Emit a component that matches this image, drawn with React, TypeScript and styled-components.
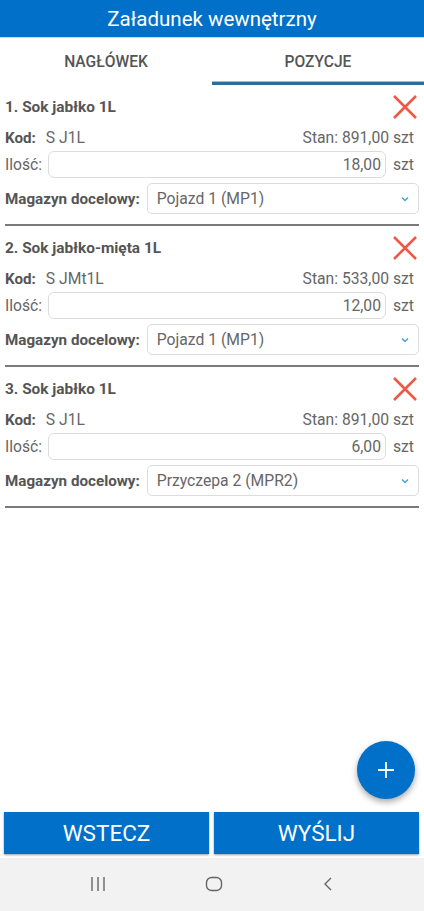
import React from "react";
import styled, { createGlobalStyle } from "styled-components";

const items = [
  { name: "Sok jabłko 1L", code: "S J1L", stock: "891,00", qty: "18,00", target: "Pojazd 1 (MP1)" },
  { name: "Sok jabłko-mięta 1L", code: "S JMt1L", stock: "533,00", qty: "12,00", target: "Pojazd 1 (MP1)" },
  { name: "Sok jabłko 1L", code: "S J1L", stock: "891,00", qty: "6,00", target: "Przyczepa 2 (MPR2)" },
];

export default function App() {
  return (
    <>
      <GlobalStyle />
      <Screen>
        <Header>Załadunek wewnętrzny</Header>
        <Tabs>
          <Tab>NAGŁÓWEK</Tab>
          <Tab active>POZYCJE</Tab>
        </Tabs>
        <List>
          {items.map((item, index) => (
            <Item key={index}>
              <TitleRow>
                <ItemName>
                  {index + 1}. {item.name}
                </ItemName>
                <RemoveButton>
                  <svg width="26" height="26" viewBox="0 0 26 26">
                    <path d="M2 2 L24 24 M24 2 L2 24" stroke="#f05846" strokeWidth="2.6" strokeLinecap="butt" />
                  </svg>
                </RemoveButton>
              </TitleRow>
              <InfoRow>
                <span>
                  <Label>Kod:</Label>
                  <Code>{item.code}</Code>
                </span>
                <span>Stan: {item.stock} szt</span>
              </InfoRow>
              <QtyRow>
                <span>Ilość:</span>
                <QtyInput>{item.qty}</QtyInput>
                <span>szt</span>
              </QtyRow>
              <TargetRow>
                <Label>Magazyn docelowy:</Label>
                <Select>
                  <span>{item.target}</span>
                  <svg width="8" height="6" viewBox="0 0 8 6">
                    <path d="M1 1.5 L4 4.5 L7 1.5" stroke="#4a9fd8" strokeWidth="1.5" fill="none" />
                  </svg>
                </Select>
              </TargetRow>
            </Item>
          ))}
        </List>
        <Fab>
          <svg width="18" height="18" viewBox="0 0 18 18">
            <path d="M9 1 V17 M1 9 H17" stroke="#fff" strokeWidth="1.8" />
          </svg>
        </Fab>
        <Actions>
          <ActionButton>WSTECZ</ActionButton>
          <ActionButton>WYŚLIJ</ActionButton>
        </Actions>
        <NavBar>
          <svg width="16" height="16" viewBox="0 0 16 16">
            <path d="M2 1 V15 M8 1 V15 M14 1 V15" stroke="#666" strokeWidth="1.4" />
          </svg>
          <svg width="18" height="16" viewBox="0 0 18 16">
            <rect x="1.5" y="1.5" width="15" height="13" rx="5" stroke="#666" strokeWidth="1.4" fill="none" />
          </svg>
          <svg width="12" height="16" viewBox="0 0 12 16">
            <path d="M9 2 L3 8 L9 14" stroke="#666" strokeWidth="1.4" fill="none" />
          </svg>
        </NavBar>
      </Screen>
    </>
  );
}

const GlobalStyle = createGlobalStyle`
  body {
    margin: 0;
    font-family: Roboto, "Noto Sans", sans-serif;
  }
`;

const Screen = styled.div`
  position: relative;
  display: flex;
  flex-direction: column;
  width: 424px;
  height: 911px;
  background: #fff;
  overflow: hidden;
`;

const Header = styled.div`
  height: 37px;
  background: #0070c9;
  color: #fff;
  font-size: 20.5px;
  display: flex;
  align-items: center;
  justify-content: center;
  border-bottom: 1px solid #d8d8d8;
`;

const Tabs = styled.div`
  display: flex;
  height: 47px;
`;

const Tab = styled.div<{ active?: boolean }>`
  flex: 1;
  display: flex;
  align-items: center;
  justify-content: center;
  font-size: 15.6px;
  font-weight: 500;
  color: #555;
  padding-top: 4px;
  border-bottom: 3px solid ${(p) => (p.active ? "#2f6c9e" : "transparent")};
  box-shadow: ${(p) => (p.active ? "inset 0 -4px 0 -3px #7fc8f0" : "none")};
`;

const List = styled.div`
  flex: 1;
  padding: 0 5px;
`;

const Item = styled.div`
  padding-top: 9px;
  padding-bottom: 10px;
  border-bottom: 2px solid #7a7a7a;
  color: #666;
  font-size: 15.7px;
`;

const TitleRow = styled.div`
  display: flex;
  justify-content: space-between;
  align-items: flex-start;
  height: 26px;
`;

const ItemName = styled.div`
  font-weight: bold;
  font-size: 15.4px;
  color: #555;
  line-height: 22px;
  padding-top: 2px;
`;

const RemoveButton = styled.div`
  display: flex;
  margin-right: 1px;
`;

const InfoRow = styled.div`
  display: flex;
  justify-content: space-between;
  align-items: center;
  box-sizing: border-box;
  height: 31px;
  padding: 3px 5px 0 0;
`;

const Label = styled.span`
  font-weight: bold;
  font-size: 15.2px;
  color: #555;
`;

const Code = styled.span`
  margin-left: 10px;
`;

const QtyRow = styled.div`
  display: flex;
  align-items: center;
  gap: 6px;
  height: 27px;
  padding-right: 5px;
`;

const QtyInput = styled.div`
  flex: 1;
  height: 27px;
  box-sizing: border-box;
  border: 1px solid #dcdcdc;
  border-radius: 6px;
  display: flex;
  align-items: center;
  justify-content: flex-end;
  padding-right: 4px;
  margin-right: 1px;
`;

const TargetRow = styled.div`
  display: flex;
  align-items: center;
  gap: 7px;
  margin-top: 5px;
`;

const Select = styled.div`
  flex: 1;
  height: 31px;
  box-sizing: border-box;
  border: 1px solid #dcdcdc;
  border-radius: 5px;
  display: flex;
  align-items: center;
  justify-content: space-between;
  padding: 0 9px;
`;

const Fab = styled.div`
  position: absolute;
  left: 357px;
  top: 741px;
  width: 58px;
  height: 58px;
  border-radius: 50%;
  background: #0070c9;
  box-shadow: 0 3px 6px rgba(0, 0, 0, 0.35);
  display: flex;
  align-items: center;
  justify-content: center;
`;

const Actions = styled.div`
  display: flex;
  gap: 5px;
  padding: 0 5px 0 4px;
  margin-bottom: 4px;
`;

const ActionButton = styled.div`
  flex: 1;
  height: 42px;
  background: #0070c9;
  color: #fff;
  font-size: 22.5px;
  display: flex;
  align-items: center;
  justify-content: center;
  box-shadow: 0 1px 2px rgba(0, 0, 0, 0.4);
`;

const NavBar = styled.div`
  height: 51px;
  background: #f2f2f2;
  display: flex;
  align-items: center;
  justify-content: space-around;
  padding: 0 40px;
  padding-bottom: 2px;
`;
